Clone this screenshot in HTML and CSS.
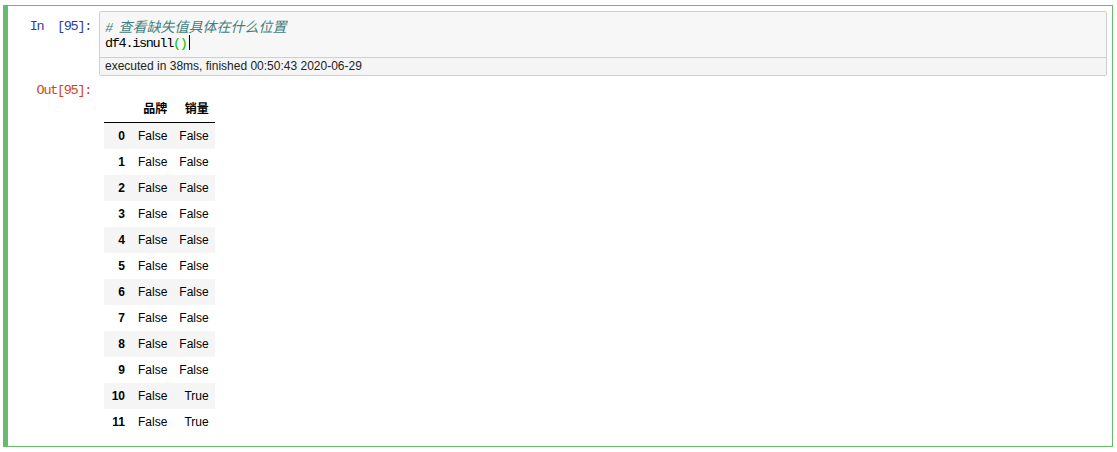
FILE: index.html
```html
<!DOCTYPE html>
<html>
<head>
<meta charset="utf-8">
<link rel="stylesheet" href="styles.css">
</head>
<body>
<div class="notebook">
  <div class="cell selected">
    <div class="input">
      <div class="prompt in-prompt">In&nbsp;&nbsp;[95]:</div>
      <div class="input-area">
        <div class="code">
          <div class="line"><span class="comment">#&nbsp;<span class="cjk">查看缺失值具体在什么位置</span></span></div>
          <div class="line">df4.isnull<span class="bracket">()</span><span class="cursor"></span></div>
        </div>
        <div class="timing">executed in 38ms, finished 00:50:43 2020-06-29</div>
      </div>
    </div>
    <div class="output">
      <div class="prompt out-prompt">Out[95]:</div>
      <div class="subarea">
        <table class="df">
          <thead>
            <tr><th class="idx"></th><th>品牌</th><th>销量</th></tr>
          </thead>
          <tbody>
            <tr><th class="idx">0</th><td>False</td><td>False</td></tr>
            <tr><th class="idx">1</th><td>False</td><td>False</td></tr>
            <tr><th class="idx">2</th><td>False</td><td>False</td></tr>
            <tr><th class="idx">3</th><td>False</td><td>False</td></tr>
            <tr><th class="idx">4</th><td>False</td><td>False</td></tr>
            <tr><th class="idx">5</th><td>False</td><td>False</td></tr>
            <tr><th class="idx">6</th><td>False</td><td>False</td></tr>
            <tr><th class="idx">7</th><td>False</td><td>False</td></tr>
            <tr><th class="idx">8</th><td>False</td><td>False</td></tr>
            <tr><th class="idx">9</th><td>False</td><td>False</td></tr>
            <tr><th class="idx">10</th><td>False</td><td>True</td></tr>
            <tr><th class="idx">11</th><td>False</td><td>True</td></tr>
          </tbody>
        </table>
      </div>
    </div>
  </div>
</div>
</body>
</html>
```
FILE: styles.css
```css
html, body {
  margin: 0;
  padding: 0;
  background: #ffffff;
}

.notebook {
  padding: 5px 4px 0 3px;
}

.cell {
  border: 1px solid #66bb6a;
  border-left: 5px solid #66bb6a;
  padding: 5px 5px 6px 5px;
  box-sizing: border-box;
}

.input, .output {
  display: flex;
  align-items: flex-start;
}

.prompt {
  width: 86px;
  flex: none;
  box-sizing: border-box;
  padding-right: 8px;
  text-align: right;
  font-family: "Liberation Mono", monospace;
  font-size: 13.5px;
  letter-spacing: -1.3px;
  line-height: 17px;
  white-space: nowrap;
}

.in-prompt {
  color: #303f9f;
  padding-top: 7px;
}

.out-prompt {
  color: #d84315;
  padding-top: 6px;
}

.input-area {
  flex: 1;
  border: 1px solid #cfcfcf;
  border-radius: 2px;
  background: #f7f7f7;
}

.code {
  padding: 6px 5px 5px 5px;
  font-family: "Liberation Mono", "Noto Sans CJK SC", monospace;
  font-size: 13.5px;
  letter-spacing: -1.3px;
  line-height: 17px;
  color: #000;
}

.line {
  height: 17px;
  white-space: nowrap;
}

.comment {
  color: #408080;
  font-style: italic;
}

.cjk {
  font-family: "Noto Sans CJK SC", sans-serif;
  font-size: 14px;
  letter-spacing: 0;
}

.bracket {
  color: #00bb00;
}

.cursor {
  display: inline-block;
  width: 0;
  height: 15px;
  border-left: 1px solid #000;
  margin-left: 2px;
  vertical-align: -3px;
}

.timing {
  border-top: 1px solid #cfcfcf;
  background: #f5f5f5;
  padding: 0 5px;
  font-family: "Liberation Sans", Arial, sans-serif;
  font-size: 12px;
  line-height: 17px;
  color: #222;
}

.subarea {
  flex: 1;
  padding: 20px 5px 5px 5px;
}

.df {
  border-collapse: collapse;
  border-spacing: 0;
  font-family: "Liberation Sans", Arial, "Noto Sans CJK SC", sans-serif;
  font-size: 12px;
  color: #000;
}

.df th, .df td {
  text-align: right;
  vertical-align: middle;
  padding: 6px;
  line-height: 14px;
  white-space: nowrap;
}

.df td {
  min-width: 29px;
}

.df th {
  font-weight: bold;
}

.df .idx {
  width: 16px;
  padding-right: 7px;
  padding-left: 5px;
}

.df thead {
  border-bottom: 1px solid #000;
}

.df tbody tr:nth-child(odd) {
  background: #f5f5f5;
}
```
